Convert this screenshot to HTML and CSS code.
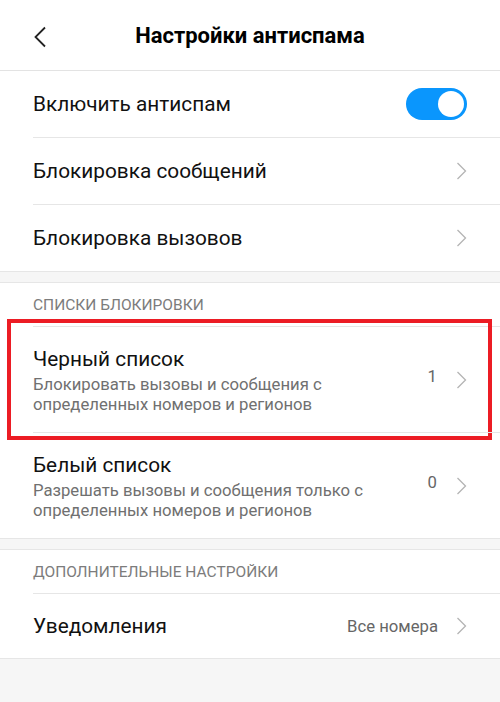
FILE: index.html
```html
<!DOCTYPE html>
<html lang="ru">
<head>
<meta charset="utf-8">
<link rel="stylesheet" href="styles.css">
</head>
<body>
<div class="page">
  <header class="topbar">
    <svg class="back" width="14" height="22" viewBox="0 0 14 22"><path d="M12 1.5 L2.5 11 L12 20.5" fill="none" stroke="#222" stroke-width="1.8"/></svg>
    <h1 class="title">Настройки антиспама</h1>
  </header>

  <section class="group first">
    <div class="row single">
      <span class="label">Включить антиспам</span>
      <span class="toggle"><span class="knob"></span></span>
    </div>
    <div class="row single divided">
      <span class="label">Блокировка сообщений</span>
      <svg class="chev" width="11" height="18" viewBox="0 0 11 18"><path d="M1.5 1 L9.5 9 L1.5 17" fill="none" stroke="#b4b4b4" stroke-width="1.3"/></svg>
    </div>
    <div class="row single divided">
      <span class="label">Блокировка вызовов</span>
      <svg class="chev" width="11" height="18" viewBox="0 0 11 18"><path d="M1.5 1 L9.5 9 L1.5 17" fill="none" stroke="#b4b4b4" stroke-width="1.3"/></svg>
    </div>
  </section>

  <section class="group">
    <div class="section-title">СПИСКИ БЛОКИРОВКИ</div>
    <div class="row double divided highlighted">
      <div class="text">
        <div class="label">Черный список</div>
        <div class="sub">Блокировать вызовы и сообщения с<br>определенных номеров и регионов</div>
      </div>
      <span class="value">1</span>
      <svg class="chev" width="11" height="18" viewBox="0 0 11 18"><path d="M1.5 1 L9.5 9 L1.5 17" fill="none" stroke="#b4b4b4" stroke-width="1.3"/></svg>
      <div class="redbox"></div>
    </div>
    <div class="row double divided">
      <div class="text">
        <div class="label">Белый список</div>
        <div class="sub">Разрешать вызовы и сообщения только с<br>определенных номеров и регионов</div>
      </div>
      <span class="value">0</span>
      <svg class="chev" width="11" height="18" viewBox="0 0 11 18"><path d="M1.5 1 L9.5 9 L1.5 17" fill="none" stroke="#b4b4b4" stroke-width="1.3"/></svg>
    </div>
  </section>

  <section class="group">
    <div class="section-title">ДОПОЛНИТЕЛЬНЫЕ НАСТРОЙКИ</div>
    <div class="row single divided notif">
      <span class="label">Уведомления</span>
      <span class="value wide">Все номера</span>
      <svg class="chev" width="11" height="18" viewBox="0 0 11 18"><path d="M1.5 1 L9.5 9 L1.5 17" fill="none" stroke="#b4b4b4" stroke-width="1.3"/></svg>
    </div>
  </section>
</div>
</body>
</html>
```

FILE: styles.css
```css
html, body {
  margin: 0;
  padding: 0;
}
body {
  background: #f6f6f6;
  font-family: Roboto, "Noto Sans", sans-serif;
  color: #111;
}
.page {
  width: 500px;
  min-height: 702px;
  background: #f6f6f6;
}
.topbar {
  height: 71px;
  background: #fff;
  border-bottom: 1px solid #e3e3e3;
  display: flex;
  align-items: center;
  justify-content: center;
  position: relative;
  box-sizing: border-box;
}
.back {
  position: absolute;
  left: 33px;
  top: 26px;
}
.title {
  margin: 0;
  font-size: 22px;
  font-weight: 700;
  color: #000;
  letter-spacing: 0;
}
.group {
  background: #fff;
  border-top: 1px solid #e6e6e6;
  border-bottom: 1px solid #e6e6e6;
  margin-top: 10px;
}
.group.first {
  margin-top: 0;
  border-top: none;
}
.row {
  display: flex;
  align-items: center;
  margin-left: 33px;
  padding-right: 33px;
  position: relative;
}
.row.divided {
  border-top: 1px solid #e6e6e6;
}
.row.single {
  height: 66px;
}
.row.double {
  height: 105px;
}
.row.notif {
  height: 64px;
}
.label {
  font-size: 20.8px;
  color: #111;
  flex: 1;
}
.text {
  flex: 1;
  display: flex;
  flex-direction: column;
  padding-top: 3px;
}
.text .label {
  flex: none;
  margin-bottom: 4px;
}
.sub {
  font-size: 16.7px;
  line-height: 20px;
  color: #707070;
}
.value {
  font-size: 16.7px;
  color: #666;
  margin-right: 19px;
  margin-top: -6px;
}
.value.wide {
  margin-top: 0;
  margin-right: 18px;
}
.chev {
  display: block;
}
.toggle {
  width: 61px;
  height: 32px;
  border-radius: 16px;
  background: #0a96fd;
  display: flex;
  align-items: center;
  justify-content: flex-end;
  padding-right: 3px;
  box-sizing: border-box;
}
.knob {
  width: 26px;
  height: 26px;
  border-radius: 50%;
  background: #fff;
}
.section-title {
  margin-left: 33px;
  height: 43px;
  display: flex;
  align-items: center;
  font-size: 15.5px;
  color: #7c7c7c;
}
.redbox {
  position: absolute;
  left: -26px;
  right: 8px;
  top: -8px;
  bottom: -8px;
  border: 4px solid #ec1c24;
}
```
